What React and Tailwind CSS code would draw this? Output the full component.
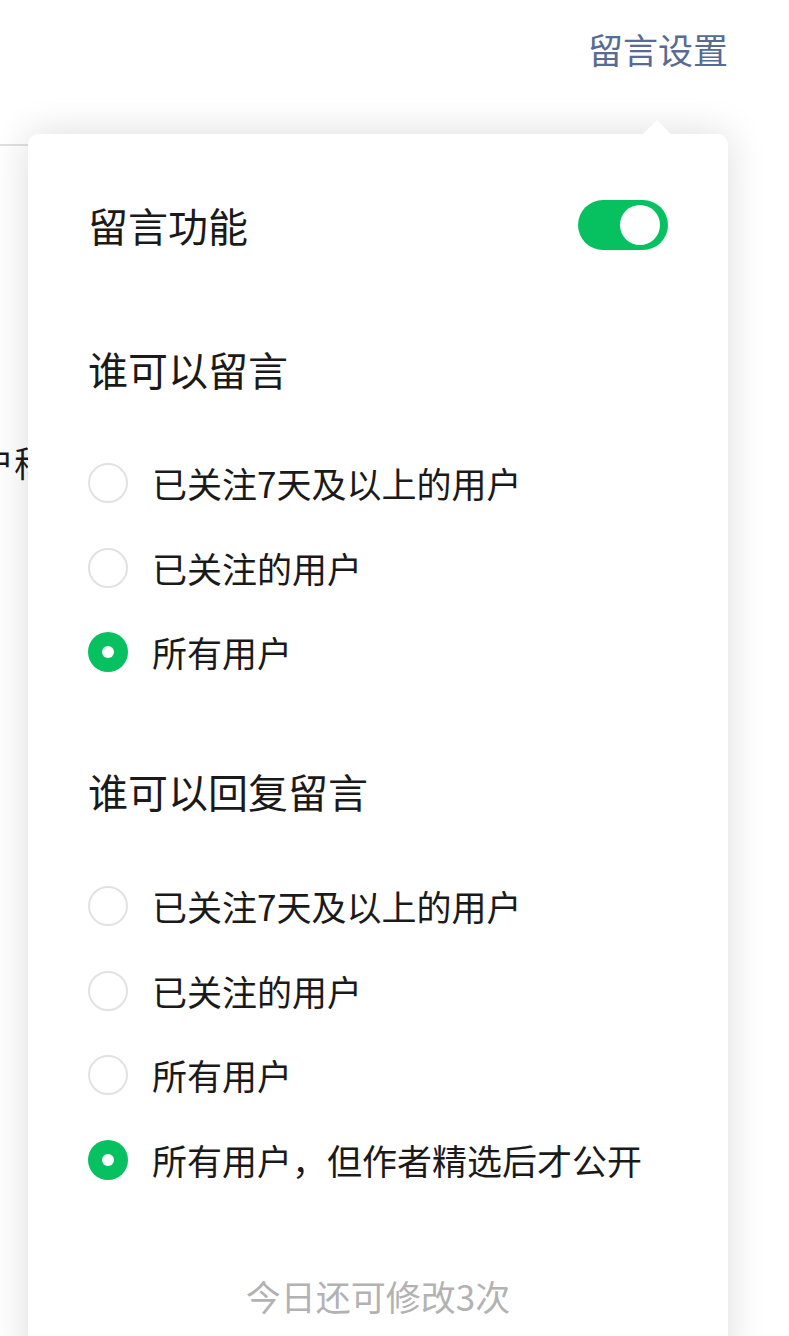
import { useState } from 'react';

const followOptions = ['已关注7天及以上的用户', '已关注的用户', '所有用户'];
const replyOptions = ['已关注7天及以上的用户', '已关注的用户', '所有用户', '所有用户，但作者精选后才公开'];

function Radio({ checked }) {
  if (checked) {
    return (
      <span className="flex h-[40px] w-[40px] shrink-0 items-center justify-center rounded-full bg-[#07c160]">
        <span className="h-[12px] w-[12px] rounded-full bg-white" />
      </span>
    );
  }
  return <span className="h-[40px] w-[40px] shrink-0 rounded-full border-2 border-[#e2e2e2] bg-white" />;
}

function OptionList({ options, value, onChange }) {
  return (
    <div className="flex flex-col">
      {options.map((label, i) => (
        <button
          key={label}
          onClick={() => onChange(i)}
          className="flex h-[84.5px] items-center gap-[24px] text-left text-[35px] text-[#1a1a1a]"
        >
          <Radio checked={value === i} />
          <span>{label}</span>
        </button>
      ))}
    </div>
  );
}

export default function App() {
  const [enabled, setEnabled] = useState(true);
  const [who, setWho] = useState(2);
  const [reply, setReply] = useState(3);

  return (
    <div
      className="relative h-[1336px] w-full overflow-hidden bg-white"
      style={{ fontFamily: '"Noto Sans CJK SC", "Noto Sans", sans-serif' }}
    >
      {/* page underneath */}
      <div className="flex h-[134px] items-start justify-end pr-[61px] pt-[22px]">
        <span className="text-[35px] leading-[54px] text-[#576b95]">留言设置</span>
      </div>
      <div className="mt-[10px] h-[2px] w-[400px] bg-[#e0e0e0]" />
      <div className="mt-[290px] ml-[-21px] whitespace-nowrap text-[35px] text-[#1a1a1a]">户称</div>

      {/* popover */}
      <div className="absolute left-[28px] top-[134px] h-[1240px] w-[700px] rounded-[10px] bg-white shadow-[0_0_40px_rgba(0,0,0,0.14)]">
        <div className="absolute right-[57px] top-[-14px] h-0 w-0 border-x-[14px] border-b-[14px] border-x-transparent border-b-white" />

        <div className="px-[60px] pt-[66px]">
          <div className="flex h-[50px] items-center justify-between">
            <span className="text-[40px] text-[#1a1a1a]">留言功能</span>
            <button
              onClick={() => setEnabled(!enabled)}
              className={`flex h-[50px] w-[90px] items-center rounded-full px-[8px] ${enabled ? 'justify-end bg-[#07c160]' : 'justify-start bg-[#e5e5e5]'}`}
            >
              <span className="h-[40px] w-[40px] rounded-full bg-white" />
            </button>
          </div>

          <div className="mt-[91px] flex h-[56px] items-center text-[40px] text-[#1a1a1a]">谁可以留言</div>
          <div className="mt-[44px]">
            <OptionList options={followOptions} value={who} onChange={setWho} />
          </div>

          <div className="mt-[68.5px] flex h-[56px] items-center text-[40px] text-[#1a1a1a]">谁可以回复留言</div>
          <div className="mt-[45px]">
            <OptionList options={replyOptions} value={reply} onChange={setReply} />
          </div>

          <div className="mt-[70px] flex h-[48px] items-center justify-center text-[35px] text-[#b2b2b2]">
            今日还可修改3次
          </div>
        </div>
      </div>
    </div>
  );
}
